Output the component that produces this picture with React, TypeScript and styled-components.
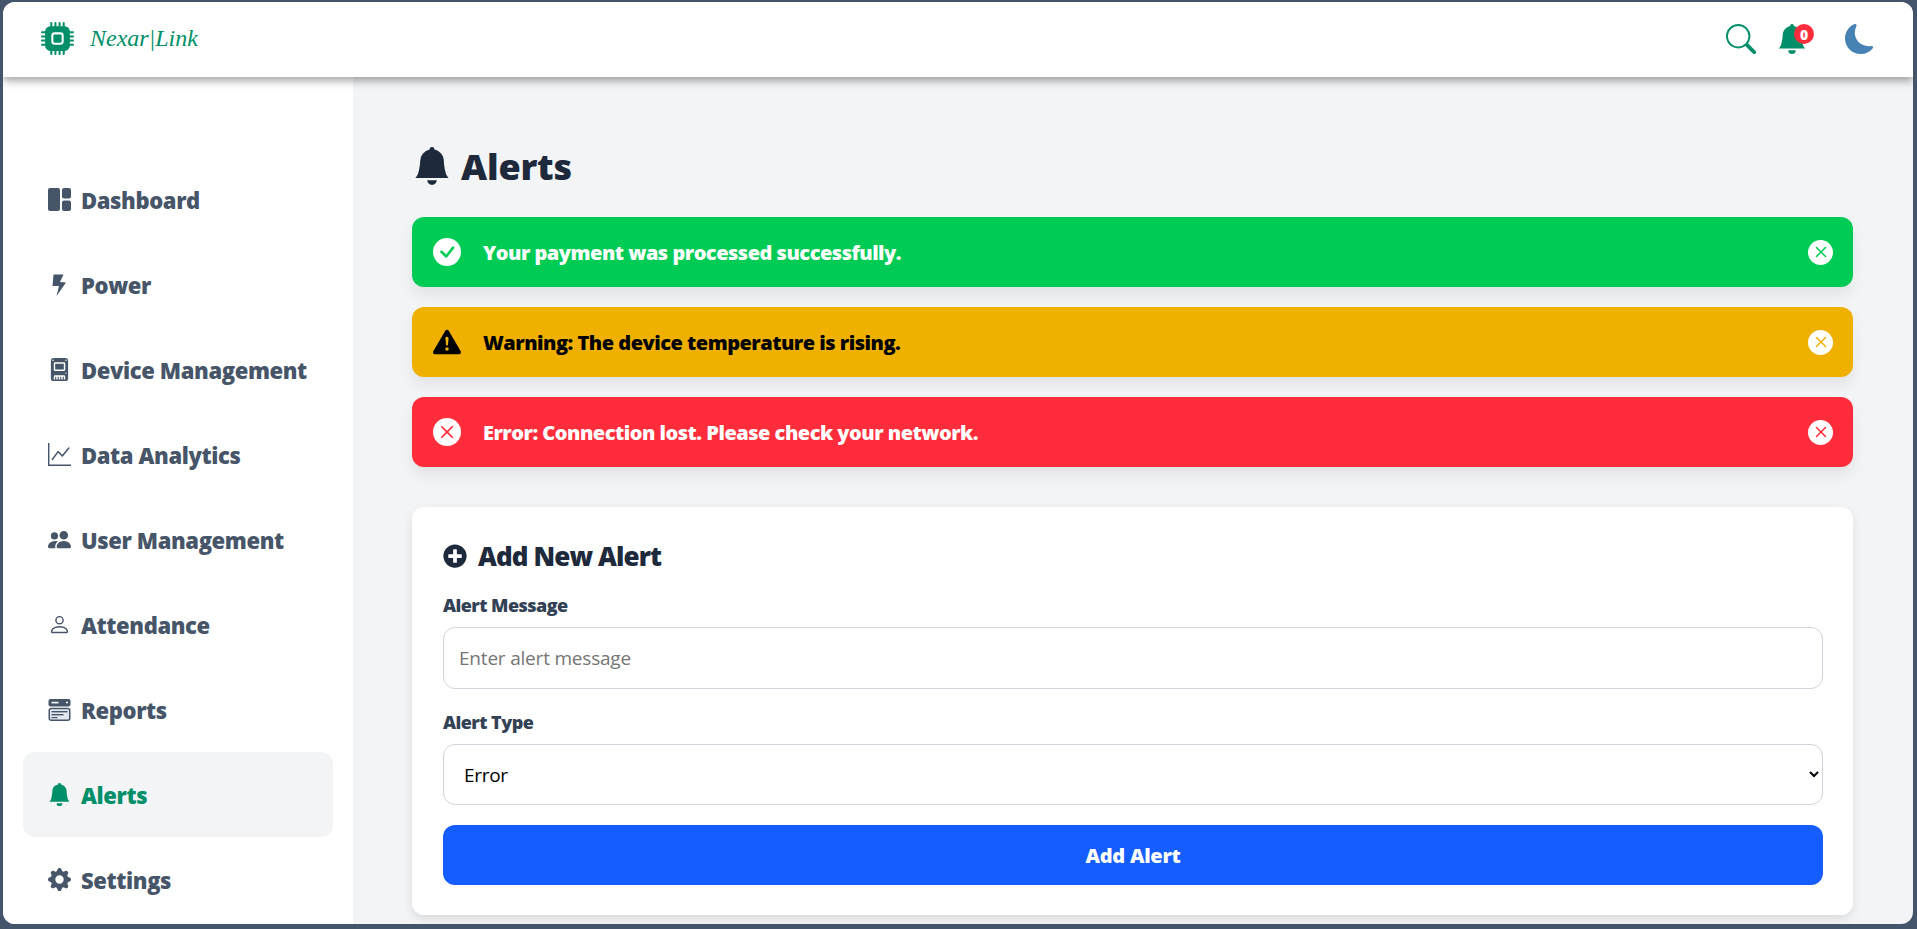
import { createGlobalStyle, styled } from "styled-components";
import { ReactNode } from "react";
import {
  BsBellFill,
  BsCheckCircleFill,
  BsCpuFill,
  BsDeviceSsdFill,
  BsExclamationTriangleFill,
  BsGearFill,
  BsGraphUp,
  BsMoonFill,
  BsPeopleFill,
  BsPerson,
  BsSearch,
  BsXCircleFill,
  BsX,
} from "react-icons/bs";
import { FaPlusCircle } from "react-icons/fa";

const GlobalStyle = createGlobalStyle`
  * { box-sizing: border-box; }
  html, body { margin: 0; height: 100%; overflow: hidden; }
  body {
    background: #44546a;
    font-family: "Open Sans", "Noto Sans", sans-serif;
  }
`;

const Frame = styled.div`
  height: 100vh;
  padding: 2px 4px 5px 3px;
`;

const Window = styled.div`
  height: 100%;
  display: flex;
  flex-direction: column;
  background: #f3f4f6;
  border-radius: 12px;
  overflow: hidden;
`;

const Header = styled.header`
  height: 75px;
  flex: none;
  display: flex;
  align-items: center;
  justify-content: space-between;
  padding: 0 38px 0 38px;
  background: #fff;
  box-shadow: 0 4px 8px rgba(0, 0, 0, 0.35);
  position: relative;
  z-index: 2;
`;

const Brand = styled.div`
  display: flex;
  align-items: center;
  gap: 16px;
  color: #008f68;
  font-size: 33px;
  margin-top: -2px;
`;

const BrandName = styled.span`
  font-family: "Liberation Serif", serif;
  font-style: italic;
  font-size: 24px;
  color: #008f68;
`;

const HeaderTools = styled.div`
  display: flex;
  align-items: center;
  margin-top: -1px;
`;

const ToolButton = styled.span<{ $color: string; $size: number; $gap: number }>`
  position: relative;
  display: flex;
  color: ${(p) => p.$color};
  font-size: ${(p) => p.$size}px;
  margin-left: ${(p) => p.$gap}px;
`;

const Badge = styled.span`
  position: absolute;
  top: 0;
  right: -7px;
  width: 20px;
  height: 20px;
  border-radius: 50%;
  background: #ff2d3b;
  color: #fff;
  font-size: 14px;
  font-weight: 800;
  display: flex;
  align-items: center;
  justify-content: center;
`;

const Body = styled.div`
  flex: 1;
  min-height: 0;
  display: flex;
`;

const Sidebar = styled.nav`
  width: 350px;
  flex: none;
  background: #fff;
  padding: 80px 20px 0;
`;

const NavItem = styled.div<{ $active?: boolean }>`
  height: 85px;
  display: flex;
  align-items: center;
  gap: 10px;
  padding-left: 25px;
  border-radius: 12px;
  font-size: 22px;
  font-weight: 800;
  letter-spacing: -0.38px;
  color: ${(p) => (p.$active ? "#008f68" : "#475569")};
  background: ${(p) => (p.$active ? "#f3f4f6" : "transparent")};
`;

const NavIcon = styled.span`
  width: 23px;
  display: flex;
  justify-content: center;
  font-size: 23px;
`;

const Main = styled.main`
  flex: 1;
  min-width: 0;
  padding: 62px 60px 0 59px;
`;

const PageTitle = styled.h1`
  margin: 0 0 24px;
  height: 54px;
  display: flex;
  align-items: center;
  gap: 10px;
  color: #1e293b;
  font-size: 36px;
  font-weight: 800;
  letter-spacing: -0.2px;
  svg {
    margin-left: 1px;
  }
`;

const AlertList = styled.div`
  display: flex;
  flex-direction: column;
  gap: 20px;
  margin-bottom: 40px;
`;

const AlertBar = styled.div<{ $bg: string; $fg: string }>`
  height: 70px;
  display: flex;
  align-items: center;
  padding: 0 20px;
  border-radius: 12px;
  background: ${(p) => p.$bg};
  color: ${(p) => p.$fg};
  box-shadow: 0 8px 14px rgba(0, 0, 0, 0.07);
  font-size: 20px;
  font-weight: 800;
  letter-spacing: -0.5px;
`;

const AlertIcon = styled.span<{ $color: string }>`
  width: 28px;
  height: 28px;
  margin-right: 22px;
  margin-left: 1px;
  display: flex;
  color: ${(p) => p.$color};
  font-size: 28px;
`;

const AlertText = styled.span`
  flex: 1;
`;

const CloseButton = styled.span<{ $color: string }>`
  width: 25px;
  height: 25px;
  border-radius: 50%;
  background: #fff;
  display: flex;
  align-items: center;
  justify-content: center;
  color: ${(p) => p.$color};
  font-size: 24px;
`;

const FormCard = styled.section`
  background: #fff;
  border-radius: 12px;
  padding: 30px 30px 30px 31px;
  box-shadow: 0 4px 10px rgba(0, 0, 0, 0.1);
`;

const FormTitle = styled.h2`
  margin: 0 0 18px;
  height: 38px;
  display: flex;
  align-items: center;
  gap: 11px;
  color: #1e293b;
  font-size: 26px;
  font-weight: 800;
  letter-spacing: -0.9px;
`;

const FieldLabel = styled.label`
  display: block;
  height: 24px;
  line-height: 24px;
  margin-bottom: 10px;
  color: #334155;
  font-size: 18px;
  font-weight: 800;
  letter-spacing: -0.55px;
`;

const TextInput = styled.input`
  display: block;
  width: 100%;
  height: 62px;
  margin-bottom: 21px;
  padding: 0 15px;
  border: 1px solid #d1d5db;
  border-radius: 12px;
  background: #fff;
  font-family: inherit;
  font-size: 19px;
  letter-spacing: -0.2px;
  &::placeholder {
    color: #757575;
    opacity: 1;
  }
`;

const SelectInput = styled.select`
  display: block;
  width: 100%;
  height: 61px;
  margin-bottom: 20px;
  padding: 0 16px;
  border: 1px solid #d1d5db;
  border-radius: 12px;
  background: #fff;
  color: #000;
  font-family: inherit;
  font-size: 19px;
  letter-spacing: -0.3px;
`;

const SubmitButton = styled.button`
  display: block;
  width: 100%;
  height: 60px;
  border: none;
  border-radius: 12px;
  background: #165dff;
  color: #fff;
  font-family: inherit;
  font-size: 20px;
  font-weight: 800;
  letter-spacing: -0.25px;
`;

const DashboardIcon = () => (
  <svg width="23" height="23" viewBox="0 0 23 23" fill="currentColor">
    <rect x="0" y="0" width="12" height="23" rx="2" />
    <rect x="14" y="0" width="9" height="10.5" rx="2" />
    <rect x="14" y="12.5" width="9" height="10.5" rx="2" />
  </svg>
);

const BoltIcon = () => (
  <svg width="15" height="24" viewBox="0 0 15 24" fill="currentColor">
    <path d="M1.5 1.5h10L8 9l6 .5L4.5 23 7 13H.5z" />
  </svg>
);

const ReportsIcon = () => (
  <svg width="23" height="22" viewBox="0 0 23 22" fill="currentColor">
    <rect x="0.5" y="0" width="22" height="7.5" rx="2" />
    <rect x="3.5" y="2.8" width="7" height="1.6" fill="#fff" />
    <circle cx="19" cy="3.6" r="1" fill="#fff" />
    <rect x="1.25" y="9.5" width="20.5" height="11.75" rx="2" fill="#e2e8f0" stroke="currentColor" strokeWidth="1.5" />
    <rect x="3.5" y="12" width="16" height="1.4" />
    <rect x="3.5" y="15" width="12" height="1.4" />
    <rect x="3.5" y="18" width="6" height="1.2" />
  </svg>
);

const navItems: { label: string; icon: ReactNode; active?: boolean }[] = [
  { label: "Dashboard", icon: <DashboardIcon /> },
  { label: "Power", icon: <BoltIcon /> },
  { label: "Device Management", icon: <BsDeviceSsdFill /> },
  { label: "Data Analytics", icon: <BsGraphUp /> },
  { label: "User Management", icon: <BsPeopleFill /> },
  { label: "Attendance", icon: <BsPerson /> },
  { label: "Reports", icon: <ReportsIcon /> },
  { label: "Alerts", icon: <BsBellFill />, active: true },
  { label: "Settings", icon: <BsGearFill /> },
];

const alerts = [
  {
    text: "Your payment was processed successfully.",
    bg: "#00cc55",
    fg: "#fff",
    iconColor: "#fff",
    icon: <BsCheckCircleFill />,
  },
  {
    text: "Warning: The device temperature is rising.",
    bg: "#f0b000",
    fg: "#000",
    iconColor: "#000",
    icon: <BsExclamationTriangleFill />,
  },
  {
    text: "Error: Connection lost. Please check your network.",
    bg: "#ff2d3b",
    fg: "#fff",
    iconColor: "#fff",
    icon: <BsXCircleFill />,
  },
];

export default function App() {
  return (
    <Frame>
      <GlobalStyle />
      <Window>
        <Header>
          <Brand>
            <BsCpuFill />
            <BrandName>Nexar|Link</BrandName>
          </Brand>
          <HeaderTools>
            <ToolButton $color="#008f68" $size={30} $gap={0}>
              <BsSearch />
            </ToolButton>
            <ToolButton $color="#008f68" $size={30} $gap={21}>
              <BsBellFill />
              <Badge>0</Badge>
            </ToolButton>
            <ToolButton $color="#4682b4" $size={30} $gap={38}>
              <BsMoonFill />
            </ToolButton>
          </HeaderTools>
        </Header>
        <Body>
          <Sidebar>
            {navItems.map((item) => (
              <NavItem key={item.label} $active={item.active}>
                <NavIcon>{item.icon}</NavIcon>
                {item.label}
              </NavItem>
            ))}
          </Sidebar>
          <Main>
            <PageTitle>
              <BsBellFill size={38} />
              Alerts
            </PageTitle>
            <AlertList>
              {alerts.map((alert) => (
                <AlertBar key={alert.text} $bg={alert.bg} $fg={alert.fg}>
                  <AlertIcon $color={alert.iconColor}>{alert.icon}</AlertIcon>
                  <AlertText>{alert.text}</AlertText>
                  <CloseButton $color={alert.bg}>
                    <BsX />
                  </CloseButton>
                </AlertBar>
              ))}
            </AlertList>
            <FormCard>
              <FormTitle>
                <FaPlusCircle size={24} />
                Add New Alert
              </FormTitle>
              <FieldLabel>Alert Message</FieldLabel>
              <TextInput placeholder="Enter alert message" />
              <FieldLabel>Alert Type</FieldLabel>
              <SelectInput defaultValue="error">
                <option value="success">Success</option>
                <option value="warning">Warning</option>
                <option value="error">Error</option>
              </SelectInput>
              <SubmitButton>Add Alert</SubmitButton>
            </FormCard>
          </Main>
        </Body>
      </Window>
    </Frame>
  );
}
